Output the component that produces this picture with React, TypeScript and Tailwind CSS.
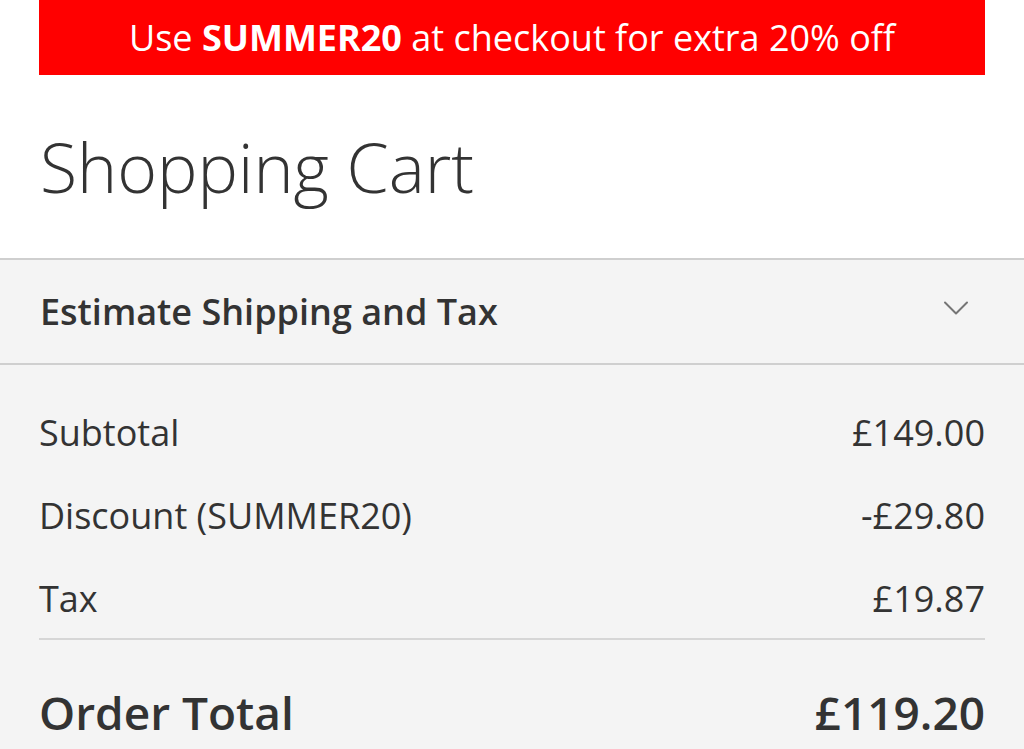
import { ChevronDown } from "lucide-react";

const rows = [
  { label: "Subtotal", value: "£149.00" },
  { label: "Discount (SUMMER20)", value: "-£29.80" },
  { label: "Tax", value: "£19.87" },
];

function App() {
  return (
    <div className="min-h-screen w-full bg-white text-[#333] font-['Open_Sans',sans-serif]">
      {/* Promo banner */}
      <div className="px-[39px]">
        <div className="flex h-[75px] items-center justify-center bg-[#ff0000] text-[36px] text-white">
          <span>
            Use <strong className="font-bold">SUMMER20</strong> at checkout for extra 20% off
          </span>
        </div>
      </div>

      {/* Title */}
      <div className="flex h-[183px] items-center px-[40px]">
        <h1 className="text-[68px] font-light leading-none">Shopping Cart</h1>
      </div>

      {/* Summary */}
      <div className="bg-[#f4f4f4]">
        <div className="flex h-[107px] items-center justify-between border-y-2 border-[#cfcfcf] pl-[40px] pr-[46px]">
          <span className="text-[36px] font-semibold">Estimate Shipping and Tax</span>
          <ChevronDown className="mb-[8px] h-[44px] w-[44px] text-[#757575]" strokeWidth={1.1} />
        </div>

        <div className="px-[39px] pt-[26px]">
          {rows.map((r) => (
            <div key={r.label} className="flex h-[83px] items-center justify-between text-[36px]">
              <span>{r.label}</span>
              <span>{r.value}</span>
            </div>
          ))}
          <div className="mt-[-2px] border-t-2 border-[#d6d6d6]" />
          <div className="flex h-[144px] items-center justify-between text-[46px] font-semibold">
            <span>Order Total</span>
            <span>£119.20</span>
          </div>
        </div>
      </div>
    </div>
  );
}

export default App;
